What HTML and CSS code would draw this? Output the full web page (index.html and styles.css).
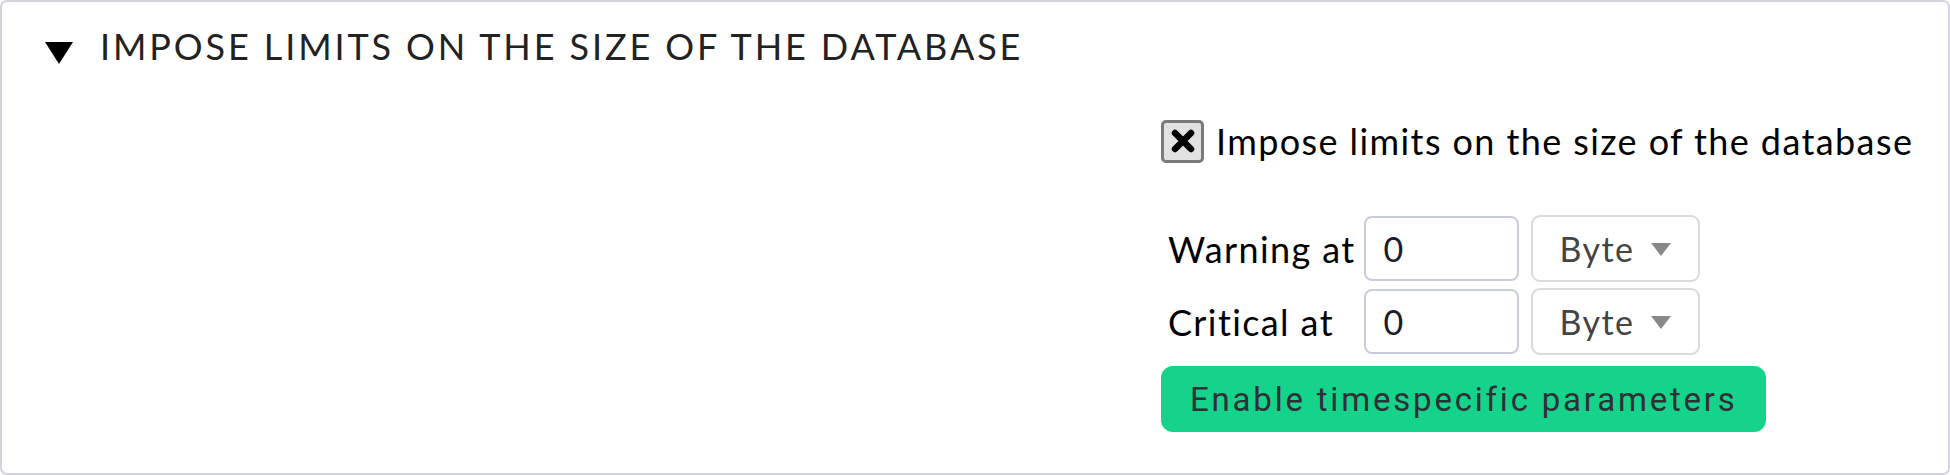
FILE: index.html
```html
<!DOCTYPE html>
<html>
<head>
<meta charset="utf-8">
<link rel="stylesheet" href="styles.css">
</head>
<body>
<div class="box">
  <div class="head">
    <svg class="tri" width="28" height="22" viewBox="0 0 28 22"><polygon points="0,0 28,0 14,22" fill="#000"/></svg>
    <span class="title">IMPOSE LIMITS ON THE SIZE OF THE DATABASE</span>
  </div>
  <div class="body">
    <div class="legend"></div>
    <div class="content">
      <label class="check">
        <span class="cb">
          <svg width="26" height="26" viewBox="0 0 26 26"><path d="M5 5 L21 21 M21 5 L5 21" stroke="#000" stroke-width="6.5" stroke-linecap="round"/></svg>
        </span>
        <span class="cbtext">Impose limits on the size of the database</span>
      </label>
      <div class="levels">
        <span class="lbl">Warning at</span>
        <span class="inp">0</span>
        <span class="sel">Byte <svg class="arr" width="20" height="13" viewBox="0 0 20 13"><polygon points="0,0 20,0 10,13" fill="#888"/></svg></span>
        <span class="lbl">Critical at</span>
        <span class="inp">0</span>
        <span class="sel">Byte <svg class="arr" width="20" height="13" viewBox="0 0 20 13"><polygon points="0,0 20,0 10,13" fill="#888"/></svg></span>
      </div>
      <div class="btn">Enable timespecific parameters</div>
    </div>
  </div>
</div>
</body>
</html>
```
FILE: styles.css
```css
html, body { margin: 0; padding: 0; background: #fff; }
body { width: 1950px; height: 475px; overflow: hidden; }
.box {
  box-sizing: border-box;
  width: 1950px;
  height: 475px;
  border: 2px solid #d3d3de;
  border-radius: 7px;
  background: #fff;
  font-family: Lato, "Liberation Sans", sans-serif;
}
.head {
  display: flex;
  align-items: flex-start;
  height: 60px;
  padding: 14px 0 0 43px;
  box-sizing: content-box;
}
.tri { display: block; margin-top: 26px; }
.title {
  margin-left: 27px;
  font-size: 36px;
  letter-spacing: 2.9px;
  color: #222;
  line-height: 60px;
}
.body { display: flex; }
.legend { width: 1159px; }
.content {
  display: flex;
  flex-direction: column;
  align-items: flex-start;
  letter-spacing: 1.4px;
}
.check {
  display: flex;
  align-items: center;
  margin-top: 43px;
}
.cb {
  box-sizing: border-box;
  width: 43px; height: 43px;
  border: 3px solid #7a7a7a;
  border-radius: 5px;
  background: #e2e2e2;
  display: flex; align-items: center; justify-content: center;
}
.cb svg { display: block; }
.cbtext {
  margin-left: 12px;
  font-size: 36px;
  color: #000;
}
.levels {
  display: grid;
  grid-template-columns: auto 155px 169px;
  column-gap: 12px;
  row-gap: 6px;
  margin-top: 52px;
  margin-left: 7px;
  align-items: center;
}
.lbl { font-size: 36px; color: #000; margin-right: -4px; }
.inp {
  box-sizing: border-box;
  height: 65px;
  border: 2px solid #c9ccdc;
  border-radius: 8px;
  padding-left: 18px;
  font-size: 34px;
  line-height: 61px;
  color: #1a1a2a;
}
.sel {
  box-sizing: border-box;
  height: 67px;
  border: 2px solid #dadada;
  border-radius: 9px;
  padding-left: 27px;
  font-size: 34px;
  color: #444;
  display: flex;
  align-items: center;
}
.arr { margin-left: 17px; margin-top: 2px; }
.btn {
  margin-top: 11px;
  height: 66px;
  box-sizing: border-box;
  padding: 0 28px 0 29px;
  background: #15d38b;
  border-radius: 12px;
  font-family: Roboto, "Liberation Sans", sans-serif;
  font-size: 33px;
  letter-spacing: 2.8px;
  color: #2f2f36;
  display: flex;
  align-items: center;
}
```
